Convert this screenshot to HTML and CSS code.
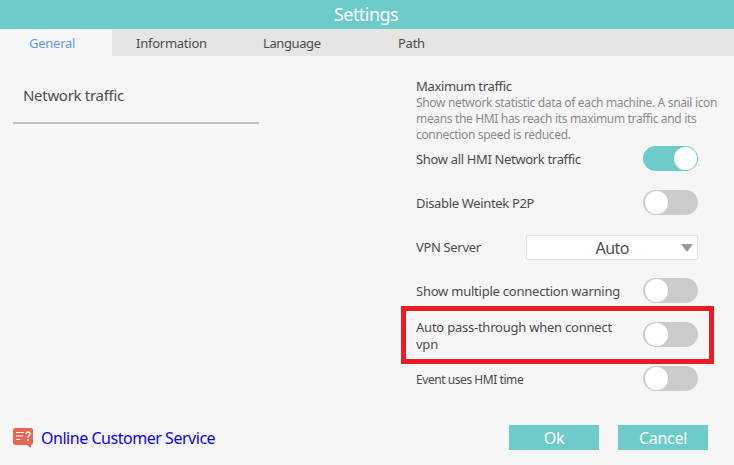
FILE: index.html
```html
<!DOCTYPE html>
<html lang="en">

<head>
    <meta charset="UTF-8">
    <meta name="viewport" content="width=device-width, initial-scale=1.0">
    <title>Settings</title>
    <link rel="stylesheet" href="styles.css">
</head>

<body>
    <header>
        <h1>Settings</h1>
    </header>
    <nav>
        <a class="tab active"><span>General</span></a>
        <a class="tab information"><span>Information</span></a>
        <a class="tab language"><span>Language</span></a>
        <a class="tab path"><span>Path</span></a>
    </nav>
    <main>
        <aside>
            <h2>Network traffic</h2>
        </aside>
        <section>
            <h3>Maximum traffic</h3>
            <p>Show network statistic data of each machine. A snail icon<br>means the HMI has reach its maximum traffic and its<br>connection speed is reduced.</p>
            <div class="row">
                <span class="label">Show all HMI Network traffic</span>
                <div class="switch on"></div>
            </div>
            <div class="row">
                <span class="label">Disable Weintek P2P</span>
                <div class="switch"></div>
            </div>
            <div class="row">
                <span class="label">VPN Server</span>
                <div class="select">
                    <span>Auto</span>
                    <svg width="12" height="8" viewBox="0 0 12 8"><path d="M0 0h12L6 8z" fill="#999"/></svg>
                </div>
            </div>
            <div class="row">
                <span class="label wide">Show multiple connection warning</span>
                <div class="switch"></div>
            </div>
            <div class="row marked">
                <span class="label wide">Auto pass-through when connect<br>vpn</span>
                <div class="switch"></div>
            </div>
            <div class="row">
                <span class="label event">Event uses HMI time</span>
                <div class="switch"></div>
            </div>
        </section>
    </main>
    <footer>
        <a class="service">
            <svg width="20" height="20" viewBox="0 0 20 20">
                <path d="M2.500 0h15A2.500 2.500 0 0 1 20 2.500v12a2.500 2.500 0 0 1-2 2.400V20l-4-3H2.500A2.500 2.500 0 0 1 0 14.500v-12A2.500 2.500 0 0 1 2.500 0z" fill="#ec6555"/>
                <path d="M3 4.500h8M3 8h7M3 11.500h4" stroke="#fff" stroke-width="1.200" fill="none"/>
                <path d="M13 6c0-2.600 4-2.600 4 0 0 1.700-2 1.600-2 3.700M15 11v2" stroke="#fff" stroke-width="1.500" fill="none"/>
            </svg>
            <span>Online Customer Service</span>
        </a>
        <button class="ok">Ok</button>
        <button class="cancel">Cancel</button>
    </footer>
</body>

</html>
```

FILE: styles.css
```css
* {
    box-sizing: border-box;
}

body {
    margin: 0;
    width: 734px;
    height: 465px;
    display: flex;
    flex-direction: column;
    background-color: #f6f6f6;
    color: #4c4c4c;
    font-family: 'Noto Sans', 'Open Sans', sans-serif;
    font-size: 13px;
    letter-spacing: -0.34px;
    overflow: hidden;
}

h1,
h2,
h3,
p {
    margin: 0;
    font-weight: normal;
}

header {
    height: 29px;
    padding-right: 2px;
    background-color: #6dcbc9;
    color: white;
    text-align: center;
}

h1 {
    font-size: 18px;
    line-height: 28px;
    letter-spacing: -0.55px;
}

nav {
    display: flex;
    height: 27px;
    background-color: #e5e5e5;
    line-height: 29px;
    letter-spacing: -0.25px;
}

.tab {
    padding-left: 24px;
    white-space: nowrap;
}

.tab.active {
    width: 112px;
    height: 27px;
    padding-left: 29px;
    background-color: #f6f6f6;
    color: #669ae6;
}

.information {
    width: 127px;
}

.language {
    width: 135px;
    letter-spacing: -0.4px;
}

main {
    display: flex;
    height: 369px;
}

aside {
    width: 246px;
    height: 68px;
    margin: 0 157px 0 13px;
    padding: 28px 0 0 10px;
    border-bottom: 2px solid #c1c1c1;
}

h2 {
    font-size: 15px;
    line-height: 22px;
    letter-spacing: -0.3px;
}

section {
    width: 302px;
    padding-top: 22px;
}

h3 {
    font-size: 13px;
    line-height: 17px;
}

p {
    color: #8b8b8b;
    font-size: 12px;
    line-height: 16px;
    white-space: nowrap;
}

.row {
    display: flex;
    position: relative;
    align-items: center;
    justify-content: space-between;
    width: 282px;
    height: 25px;
    margin-bottom: 19px;
}

p + .row {
    margin-top: 3px;
}

.label {
    line-height: 17px;
    padding-top: 2px;
    white-space: nowrap;
}

.wide {
    letter-spacing: -0.23px;
}

.event {
    font-size: 12px;
    letter-spacing: -0.44px;
}

.switch {
    width: 55px;
    height: 25px;
    padding: 1px 2px;
    border-radius: 13px;
    background-color: #cbcbcb;
}

.switch::before {
    content: "";
    display: block;
    width: 23px;
    height: 23px;
    border-radius: 50%;
    background-color: white;
}

.switch.on {
    background-color: #6dcbc9;
}

.switch.on::before {
    margin-left: auto;
    margin-right: -1px;
}

.select {
    display: flex;
    align-items: center;
    justify-content: flex-end;
    width: 172px;
    height: 25px;
    margin-top: 2px;
    padding-right: 4px;
    border: 1px solid #e0e0e0;
    border-radius: 2px;
    background-color: white;
    font-size: 16px;
    letter-spacing: -0.5px;
}

.select span {
    margin-right: 52px;
    padding-top: 1px;
}

/* red frame around the highlighted option */
.marked::after {
    content: "";
    position: absolute;
    top: -16px;
    right: -16px;
    bottom: -17px;
    left: -15px;
    border: 5px solid #ed1c24;
}

footer {
    display: flex;
    align-items: center;
    height: 25px;
    padding-left: 13px;
}

.service {
    display: flex;
    align-items: center;
    gap: 8px;
    width: 496px;
    color: #0d00f0;
    font-size: 16px;
    letter-spacing: -0.47px;
    white-space: nowrap;
}

button {
    width: 90px;
    height: 25px;
    margin-right: 19px;
    padding: 1px 0 0;
    border: 0;
    background-color: #6dcbc9;
    color: white;
    font-family: inherit;
    font-size: 16px;
    letter-spacing: -0.3px;
}
```
